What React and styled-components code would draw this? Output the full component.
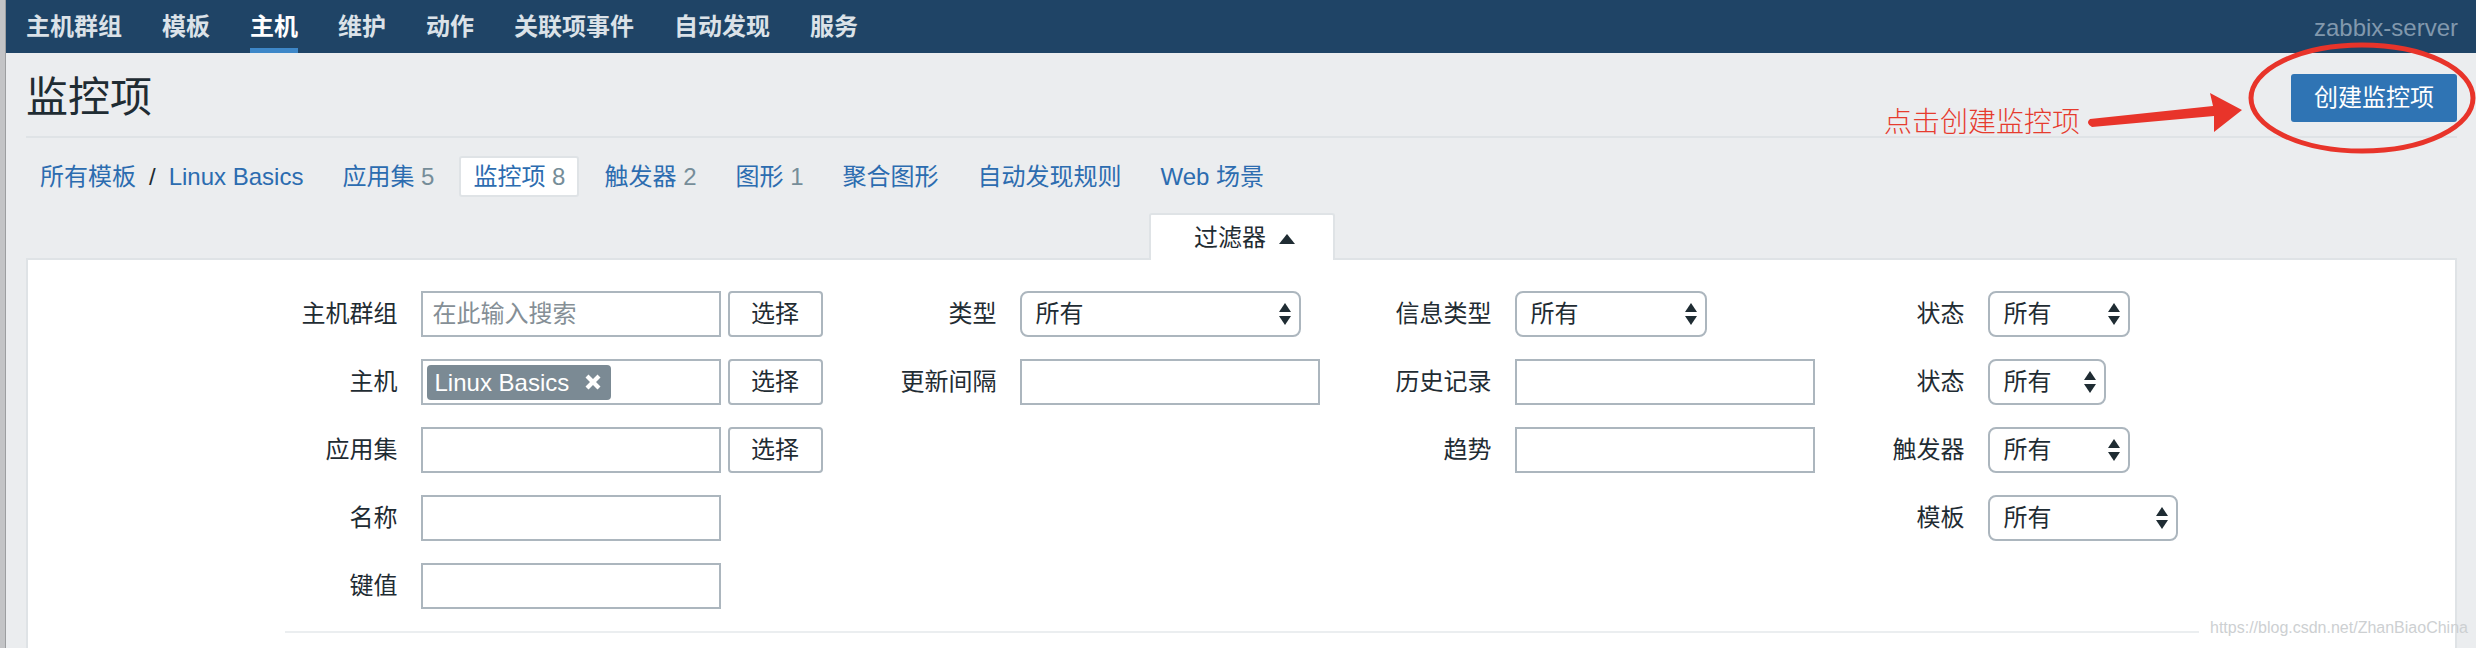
import React from "react";
import styled, { createGlobalStyle } from "styled-components";

const GlobalStyle = createGlobalStyle`
  html, body { margin: 0; padding: 0; }
  body {
    background: #ebedef;
    font-family: "Liberation Sans", "Noto Sans CJK SC", sans-serif;
    color: #1f2c33;
  }
  * { box-sizing: border-box; }
`;

const Window = styled.div`
  position: relative;
  display: flex;
  width: 2476px;
  height: 648px;
  overflow: hidden;
`;

const WindowEdge = styled.div`
  flex: none;
  width: 6px;
  background: #c3c4c6;
  border-right: 1px solid #9c9ea0;
`;

const Page = styled.div`
  flex: 1;
  min-width: 0;
  display: flex;
  flex-direction: column;
`;

const TopNav = styled.nav`
  flex: none;
  height: 53px;
  background: #1f4466;
  display: flex;
  align-items: stretch;
  padding-right: 18px;
`;

const NavList = styled.div`
  flex: 1;
  display: flex;
`;

const NavItem = styled.a`
  margin: 0 20px;
  height: 53px;
  display: flex;
  align-items: center;
  font-size: 24px;
  font-weight: 700;
  color: ${(p) => (p.$active ? "#ffffff" : "#dbe2e8")};
  border-bottom: 5px solid ${(p) => (p.$active ? "#3d87c8" : "transparent")};
  white-space: nowrap;
  cursor: pointer;
`;

const ServerName = styled.div`
  align-self: center;
  font-size: 24px;
  color: #8198ad;
  padding-top: 2px;
`;

const Main = styled.main`
  flex: 1;
  display: flex;
  flex-direction: column;
  padding: 0 19px 0 20px;
`;

const Header = styled.header`
  display: flex;
  justify-content: space-between;
  align-items: center;
  padding: 21px 0 14px;
  border-bottom: 2px solid #dfe3e6;
`;

const Title = styled.h1`
  margin: 0;
  font-size: 42px;
  font-weight: 400;
  line-height: 48px;
  color: #1f2c33;
`;

const CreateButton = styled.button`
  height: 48px;
  padding: 0 23px;
  background: #2f74b4;
  color: #ffffff;
  border: none;
  border-radius: 3px;
  font-family: inherit;
  font-size: 24px;
  line-height: 48px;
`;

const Breadcrumbs = styled.div`
  display: flex;
  align-items: center;
  gap: 11px;
  margin-top: 18px;
`;

const Crumb = styled.a`
  height: 41px;
  padding: 0 12px;
  display: flex;
  align-items: center;
  border: 2px solid ${(p) => (p.$active ? "#dfe3e6" : "transparent")};
  background: ${(p) => (p.$active ? "#ffffff" : "transparent")};
  border-radius: 3px;
  font-size: 24px;
  line-height: 37px;
  color: #2c6cb0;
  white-space: nowrap;
  cursor: pointer;
`;

const Slash = styled.span`
  margin: 0 13px;
  color: #1f2c33;
`;

const Count = styled.span`
  color: #768d99;
`;

const FilterTabRow = styled.div`
  display: flex;
  justify-content: center;
  margin-top: 16px;
`;

const FilterTab = styled.div`
  position: relative;
  z-index: 1;
  width: 186px;
  height: 47px;
  margin-bottom: -2px;
  display: flex;
  align-items: center;
  justify-content: center;
  gap: 13px;
  background: #ffffff;
  border: 2px solid #dfe3e6;
  border-bottom: none;
  border-radius: 3px 3px 0 0;
  font-size: 24px;
  line-height: 45px;
  color: #1f2c33;
  padding-left: 6px;
`;

const TriangleUp = styled.span`
  width: 0;
  height: 0;
  border-left: 8px solid transparent;
  border-right: 8px solid transparent;
  border-bottom: 10px solid #1f2c33;
  margin-top: 2px;
`;

const FilterPanel = styled.section`
  flex: 1;
  background: #ffffff;
  border: 2px solid #dfe3e6;
  border-bottom: none;
`;

const FilterGrid = styled.div`
  display: grid;
  grid-template-columns: 136px 458px 141px 334px 161px 354px 119px 211px;
  grid-auto-rows: 46px;
  row-gap: 22px;
  width: fit-content;
  margin: 0 auto;
  padding: 31px 0 22px;
  border-bottom: 2px solid #ebeef0;
`;

const Label = styled.label`
  grid-column: ${(p) => p.$col};
  grid-row: ${(p) => p.$row};
  align-self: center;
  text-align: right;
  padding-right: 23px;
  font-size: 24px;
  line-height: 46px;
  white-space: nowrap;
  color: #1f2c33;
`;

const Field = styled.div`
  grid-column: ${(p) => p.$col};
  grid-row: ${(p) => p.$row};
  display: flex;
  align-items: center;
  gap: 7px;
`;

const TextInput = styled.input`
  width: 300px;
  height: 46px;
  border: 2px solid #acb6be;
  padding: 0 10px;
  background: #ffffff;
  font-family: inherit;
  font-size: 24px;
  color: #1f2c33;
  outline: none;
  &::placeholder { color: #858f96; }
`;

const MultiSelect = styled.div`
  width: 300px;
  height: 46px;
  border: 2px solid #acb6be;
  padding: 0 4px;
  display: flex;
  align-items: center;
  background: #ffffff;
`;

const Tag = styled.span`
  height: 35px;
  padding: 0 8px;
  display: flex;
  align-items: center;
  gap: 14px;
  background: #7b8a94;
  border-radius: 4px;
  color: #ffffff;
  font-size: 24px;
  line-height: 35px;
  white-space: nowrap;
`;

const PickButton = styled.button`
  width: 95px;
  height: 46px;
  border: 2px solid #acb6be;
  border-radius: 4px;
  background: #ffffff;
  font-family: inherit;
  font-size: 24px;
  line-height: 42px;
  color: #1f2c33;
  padding: 0;
`;

const SelectBox = styled.div`
  width: ${(p) => p.$width}px;
  height: 46px;
  border: 2px solid #acb6be;
  border-radius: 8px;
  background: #ffffff;
  display: flex;
  align-items: center;
  justify-content: space-between;
  padding: 0 8px 0 14px;
  font-size: 24px;
  line-height: 42px;
  color: #1f2c33;
  white-space: nowrap;
`;

const Overlay = styled.svg`
  position: absolute;
  left: 0;
  top: 0;
  pointer-events: none;
`;

const AnnotationText = styled.div`
  position: absolute;
  left: 1884px;
  top: 104px;
  font-family: "Noto Sans CJK SC", sans-serif;
  font-size: 28px;
  font-weight: 300;
  line-height: 32px;
  color: #e63b2e;
  white-space: nowrap;
`;

const Watermark = styled.div`
  position: absolute;
  left: 2210px;
  top: 619px;
  font-size: 16px;
  color: #cdd0d2;
  white-space: nowrap;
`;

const Arrows = () => (
  <svg width="12" height="22" viewBox="0 0 12 22">
    <path d="M6 0 L12 9 L0 9 Z" fill="#1f2c33" />
    <path d="M0 13 L12 13 L6 22 Z" fill="#1f2c33" />
  </svg>
);

const RemoveIcon = () => (
  <svg width="20" height="20" viewBox="0 0 20 20">
    <path
      d="M2.5 5.5 L5.5 2.5 L10 7 L14.5 2.5 L17.5 5.5 L13 10 L17.5 14.5 L14.5 17.5 L10 13 L5.5 17.5 L2.5 14.5 L7 10 Z"
      fill="#ffffff"
    />
  </svg>
);

const Select = ({ width, value = "所有" }) => (
  <SelectBox $width={width}>
    <span>{value}</span>
    <Arrows />
  </SelectBox>
);

const navItems = ["主机群组", "模板", "主机", "维护", "动作", "关联项事件", "自动发现", "服务"];

const tabs = [
  { label: "应用集", count: 5 },
  { label: "监控项", count: 8, active: true },
  { label: "触发器", count: 2 },
  { label: "图形", count: 1 },
  { label: "聚合图形" },
  { label: "自动发现规则" },
  { label: "Web 场景" },
];

const cells = [
  { col: 1, row: 1, label: "主机群组", field: <><TextInput placeholder="在此输入搜索" /><PickButton>选择</PickButton></> },
  { col: 1, row: 2, label: "主机", field: <><MultiSelect><Tag>Linux Basics<RemoveIcon /></Tag></MultiSelect><PickButton>选择</PickButton></> },
  { col: 1, row: 3, label: "应用集", field: <><TextInput /><PickButton>选择</PickButton></> },
  { col: 1, row: 4, label: "名称", field: <TextInput /> },
  { col: 1, row: 5, label: "键值", field: <TextInput /> },
  { col: 3, row: 1, label: "类型", field: <Select width={281} /> },
  { col: 3, row: 2, label: "更新间隔", field: <TextInput /> },
  { col: 5, row: 1, label: "信息类型", field: <Select width={192} /> },
  { col: 5, row: 2, label: "历史记录", field: <TextInput /> },
  { col: 5, row: 3, label: "趋势", field: <TextInput /> },
  { col: 7, row: 1, label: "状态", field: <Select width={142} /> },
  { col: 7, row: 2, label: "状态", field: <Select width={118} /> },
  { col: 7, row: 3, label: "触发器", field: <Select width={142} /> },
  { col: 7, row: 4, label: "模板", field: <Select width={190} /> },
];

export default function App() {
  return (
    <>
      <GlobalStyle />
      <Window>
        <WindowEdge />
        <Page>
          <TopNav>
            <NavList>
              {navItems.map((item) => (
                <NavItem key={item} $active={item === "主机"}>
                  {item}
                </NavItem>
              ))}
            </NavList>
            <ServerName>zabbix-server</ServerName>
          </TopNav>
          <Main>
            <Header>
              <Title>监控项</Title>
              <CreateButton>创建监控项</CreateButton>
            </Header>
            <Breadcrumbs>
              <Crumb>
                所有模板<Slash>/</Slash>Linux Basics
              </Crumb>
              {tabs.map((t) => (
                <Crumb key={t.label} $active={t.active}>
                  {t.label}
                  {t.count !== undefined && <Count>&nbsp;{t.count}</Count>}
                </Crumb>
              ))}
            </Breadcrumbs>
            <FilterTabRow>
              <FilterTab>
                过滤器
                <TriangleUp />
              </FilterTab>
            </FilterTabRow>
            <FilterPanel>
              <FilterGrid>
                {cells.map((c, i) => (
                  <React.Fragment key={i}>
                    <Label $col={c.col} $row={c.row}>{c.label}</Label>
                    <Field $col={c.col + 1} $row={c.row}>{c.field}</Field>
                  </React.Fragment>
                ))}
              </FilterGrid>
            </FilterPanel>
          </Main>
        </Page>

        <Overlay width="2476" height="648" viewBox="0 0 2476 648">
          <ellipse cx="2362" cy="98" rx="111" ry="53" fill="none" stroke="#e8342a" strokeWidth="5" />
          <path
            d="M2090 119 L2213 106 L2210 93 L2242 110 L2214 132 L2214 116 L2092 127 Q2085 123 2090 119 Z"
            fill="#e8342a"
          />
        </Overlay>
        <AnnotationText>点击创建监控项</AnnotationText>
        <Watermark>https://blog.csdn.net/ZhanBiaoChina</Watermark>
      </Window>
    </>
  );
}
